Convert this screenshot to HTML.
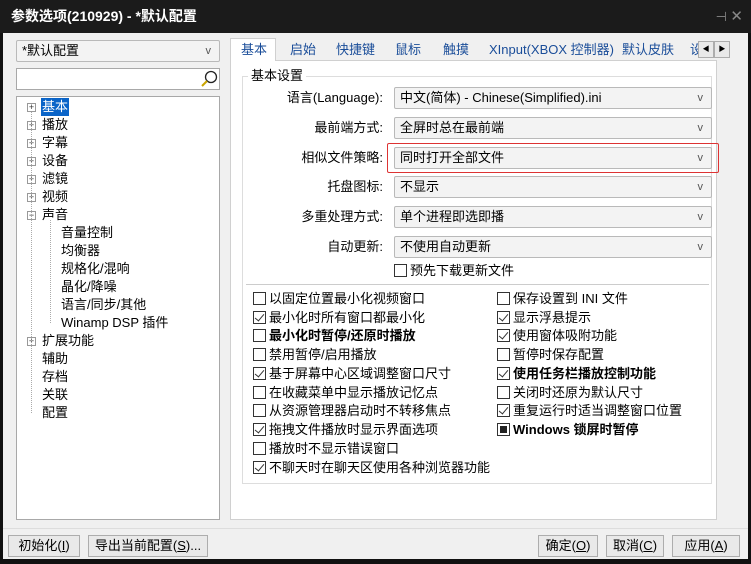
<!DOCTYPE html>
<html><head><meta charset="utf-8"><style>
*{box-sizing:border-box;margin:0;padding:0}
body{width:751px;height:564px;background:#111;position:relative;overflow:hidden;font-family:"Liberation Sans","Noto Sans CJK SC",sans-serif;font-size:13px;color:#000}
.a{position:absolute}
.title{left:0;top:0;width:751px;height:33px;background:#1b1b1b;color:#fff;font-size:14px;font-weight:bold;line-height:32px;padding-left:11px}
.bodyw{left:3px;top:33px;width:745px;height:526px;background:#f0f0f0}
.box{background:#fff;border:1px solid #a8a8a8}
.dd{background:#f3f3f3;border:1px solid #b9b9b9;border-radius:2px;height:22px;line-height:20px;padding-left:5px;font-size:13px}
.dd:after{content:"v";position:absolute;right:8px;top:0;color:#555;font-size:11px}
.lbl{text-align:right;width:150px;font-size:13px;line-height:22px}
.cb{font-size:13px;line-height:18px;white-space:nowrap}
.cb i{display:inline-block;width:13px;height:13px;border:1px solid #333;vertical-align:-2px;margin-right:3px;position:relative;background:#fff;font-style:normal}
.cb i.c:after{content:"";position:absolute;left:3px;top:0px;width:4px;height:8px;border:solid #333;border-width:0 1px 1px 0;transform:rotate(40deg)}
.cb i.f:after{content:"";position:absolute;left:2px;top:2px;width:7px;height:7px;background:#222}
.tree div{position:absolute;font-size:13px;line-height:18px}
.pm{position:absolute;width:9px;height:9px;border:1px solid #999;background:#fff;font-size:9px;line-height:7px;text-align:center;color:#333}
.btn{background:#e9e9e9;border:1px solid #adadad;height:22px;line-height:20px;text-align:center;font-size:13px}
.tab{top:40px;font-size:13px;line-height:20px;color:#1a4d99}
</style></head><body>
<div class="a title">参数选项(210929) - *默认配置</div>
<div class="a" style="right:24px;top:9px;color:#888;font-size:13px">⊣</div>
<div class="a" style="right:8px;top:7px;color:#888;font-size:15px">✕</div>
<div class="a bodyw"></div>
<div class="a dd" style="left:16px;top:40px;width:204px">*默认配置</div>
<div class="a box" style="left:16px;top:68px;width:204px;height:22px"></div>
<svg class="a" style="left:199px;top:70px" width="20" height="18"><circle cx="12" cy="7" r="5.5" fill="none" stroke="#222" stroke-width="1.3"/><line x1="8" y1="11" x2="3" y2="16" stroke="#c9a400" stroke-width="2"/></svg>
<div class="a box tree" style="left:16px;top:96px;width:204px;height:424px">
<div style="left:24px;top:1px;background:#0a64c8;color:#fff;padding:0 1px">基本</div>
<div style="left:25px;top:19px">播放</div><div style="left:25px;top:37px">字幕</div><div style="left:25px;top:55px">设备</div><div style="left:25px;top:73px">滤镜</div><div style="left:25px;top:91px">视频</div><div style="left:25px;top:109px">声音</div>
<div style="left:44px;top:127px">音量控制</div><div style="left:44px;top:145px">均衡器</div><div style="left:44px;top:163px">规格化/混响</div><div style="left:44px;top:181px">晶化/降噪</div><div style="left:44px;top:199px">语言/同步/其他</div><div style="left:44px;top:217px">Winamp DSP 插件</div>
<div style="left:25px;top:235px">扩展功能</div><div style="left:25px;top:253px">辅助</div><div style="left:25px;top:271px">存档</div><div style="left:25px;top:289px">关联</div><div style="left:25px;top:307px">配置</div>
<span class="pm" style="left:10px;top:6px">+</span><span class="pm" style="left:10px;top:24px">+</span><span class="pm" style="left:10px;top:42px">+</span><span class="pm" style="left:10px;top:60px">+</span><span class="pm" style="left:10px;top:78px">+</span><span class="pm" style="left:10px;top:96px">+</span><span class="pm" style="left:10px;top:114px">−</span><span class="pm" style="left:10px;top:240px">+</span>
<span class="a" style="left:14px;top:15px;height:301px;border-left:1px dotted #aaa"></span>
<span class="a" style="left:33px;top:123px;height:103px;border-left:1px dotted #aaa"></span>
</div>
<div class="a" style="left:230px;top:60px;width:487px;height:460px;background:#fff;border:1px solid #d0d0d0"></div>
<div class="a" style="left:230px;top:38px;width:46px;height:23px;background:#fff;border:1px solid #d0d0d0;border-bottom:none"></div>
<div class="a tab" style="left:241px">基本</div><div class="a tab" style="left:290px">启始</div><div class="a tab" style="left:336px">快捷键</div><div class="a tab" style="left:395px">鼠标</div><div class="a tab" style="left:443px">触摸</div><div class="a tab" style="left:489px">XInput(XBOX 控制器)</div><div class="a tab" style="left:622px">默认皮肤</div><div class="a tab" style="left:690px">设</div>
<div class="a btn" style="left:698px;top:41px;width:16px;height:17px;font-size:7px;line-height:15px">◀</div><div class="a btn" style="left:714px;top:41px;width:16px;height:17px;font-size:7px;line-height:15px">▶</div>
<div class="a" style="left:242px;top:76px;width:470px;height:408px;border:1px solid #ddd"></div>
<div class="a" style="left:248px;top:67px;background:#fff;padding:0 3px;line-height:18px">基本设置</div>
<div class="a lbl" style="left:233px;top:87px">语言(Language):</div><div class="a dd" style="left:394px;top:87px;width:318px">中文(简体) - Chinese(Simplified).ini</div>
<div class="a lbl" style="left:233px;top:117px">最前端方式:</div><div class="a dd" style="left:394px;top:117px;width:318px">全屏时总在最前端</div>
<div class="a" style="left:387px;top:143px;width:332px;height:30px;border:1px solid #d33;border-radius:2px"></div>
<div class="a lbl" style="left:233px;top:147px">相似文件策略:</div><div class="a dd" style="left:394px;top:147px;width:318px">同时打开全部文件</div>
<div class="a lbl" style="left:233px;top:176px">托盘图标:</div><div class="a dd" style="left:394px;top:176px;width:318px">不显示</div>
<div class="a lbl" style="left:233px;top:206px">多重处理方式:</div><div class="a dd" style="left:394px;top:206px;width:318px">单个进程即选即播</div>
<div class="a lbl" style="left:233px;top:236px">自动更新:</div><div class="a dd" style="left:394px;top:236px;width:318px">不使用自动更新</div>
<div class="a cb" style="left:394px;top:262px"><i></i>预先下载更新文件</div>
<div class="a" style="left:246px;top:284px;width:463px;border-top:1px solid #ccc"></div>
<div class="a cb" style="left:253px;top:290px"><i></i>以固定位置最小化视频窗口</div>
<div class="a cb" style="left:253px;top:309px"><i class="c"></i>最小化时所有窗口都最小化</div>
<div class="a cb" style="left:253px;top:327px;font-weight:bold"><i></i>最小化时暂停/还原时播放</div>
<div class="a cb" style="left:253px;top:346px"><i></i>禁用暂停/启用播放</div>
<div class="a cb" style="left:253px;top:365px"><i class="c"></i>基于屏幕中心区域调整窗口尺寸</div>
<div class="a cb" style="left:253px;top:384px"><i></i>在收藏菜单中显示播放记忆点</div>
<div class="a cb" style="left:253px;top:402px"><i></i>从资源管理器启动时不转移焦点</div>
<div class="a cb" style="left:253px;top:421px"><i class="c"></i>拖拽文件播放时显示界面选项</div>
<div class="a cb" style="left:253px;top:440px"><i></i>播放时不显示错误窗口</div>
<div class="a cb" style="left:253px;top:459px"><i class="c"></i>不聊天时在聊天区使用各种浏览器功能</div>
<div class="a cb" style="left:497px;top:290px"><i></i>保存设置到 INI 文件</div>
<div class="a cb" style="left:497px;top:309px"><i class="c"></i>显示浮悬提示</div>
<div class="a cb" style="left:497px;top:327px"><i class="c"></i>使用窗体吸附功能</div>
<div class="a cb" style="left:497px;top:346px"><i></i>暂停时保存配置</div>
<div class="a cb" style="left:497px;top:365px;font-weight:bold"><i class="c"></i>使用任务栏播放控制功能</div>
<div class="a cb" style="left:497px;top:384px"><i></i>关闭时还原为默认尺寸</div>
<div class="a cb" style="left:497px;top:402px"><i class="c"></i>重复运行时适当调整窗口位置</div>
<div class="a cb" style="left:497px;top:421px;font-weight:bold"><i class="f"></i>Windows 锁屏时暂停</div>
<div class="a" style="left:3px;top:528px;width:745px;border-top:1px solid #ddd"></div>
<div class="a btn" style="left:8px;top:535px;width:72px">初始化(<u>I</u>)</div>
<div class="a btn" style="left:88px;top:535px;width:120px">导出当前配置(<u>S</u>)...</div>
<div class="a btn" style="left:538px;top:535px;width:60px">确定(<u>O</u>)</div>
<div class="a btn" style="left:606px;top:535px;width:58px">取消(<u>C</u>)</div>
<div class="a btn" style="left:672px;top:535px;width:68px">应用(<u>A</u>)</div>
</body></html>
